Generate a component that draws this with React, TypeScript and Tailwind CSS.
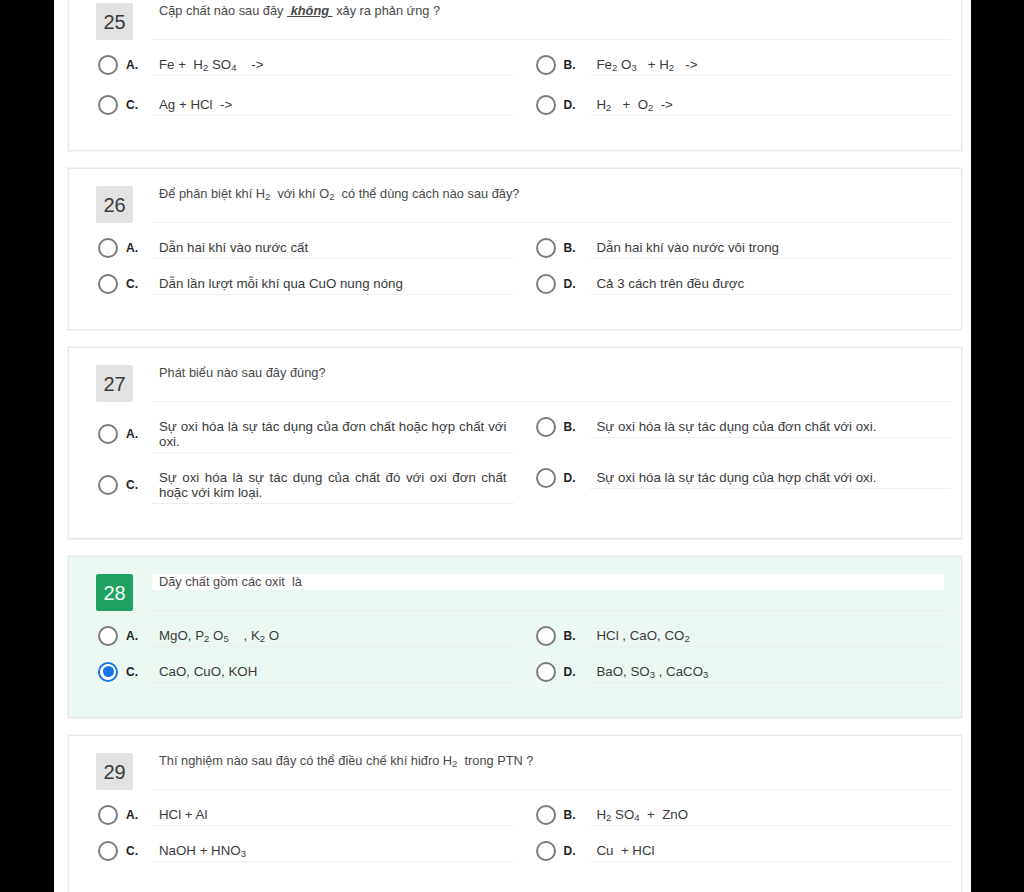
import React from 'react';

type Opt = React.ReactNode;

interface Question {
  num: number;
  text: React.ReactNode;
  options: [Opt, Opt, Opt, Opt];
  active?: boolean;
  selected?: number;
  tallSecondRow?: boolean;
}

const S = ({ children }: { children: React.ReactNode }) => <sub className="text-[9.5px]">{children}</sub>;

const questions: Question[] = [
  {
    num: 25,
    text: (
      <>
        Cặp chất nào sau đây{' '}
        <span className="font-bold italic underline">{'\u00a0không\u00a0'}</span> xảy ra phản ứng ?
      </>
    ),
    options: [
      <>Fe +  H<S>2</S> SO<S>4</S>{'    ->'}</>,
      <>Fe<S>2</S> O<S>3</S>{'   + '}H<S>2</S>{'   ->'}</>,
      <>Ag + HCl  -&gt;</>,
      <>H<S>2</S>{'   +  '}O<S>2</S>{'  ->'}</>,
    ],
    tallSecondRow: true,
  },
  {
    num: 26,
    text: <>Để phân biệt khí H<S>2</S>  với khí O<S>2</S>  có thể dùng cách nào sau đây?</>,
    options: [
      'Dẫn hai khí vào nước cất',
      'Dẫn hai khí vào nước vôi trong',
      'Dẫn lần lượt mỗi khí qua CuO nung nóng',
      'Cả 3 cách trên đều được',
    ],
  },
  {
    num: 27,
    text: 'Phát biểu nào sau đây đúng?',
    options: [
      'Sự oxi hóa là sự tác dụng của đơn chất hoặc hợp chất với oxi.',
      'Sự oxi hóa là sự tác dụng của đơn chất với oxi.',
      'Sự oxi hóa là sự tác dụng của chất đó với oxi đơn chất hoặc với kim loại.',
      'Sự oxi hóa là sự tác dụng của hợp chất với oxi.',
    ],
  },
  {
    num: 28,
    text: 'Dãy chất gồm các oxit  là',
    options: [
      <>MgO, P<S>2</S> O<S>5</S>{'    , '}K<S>2</S> O</>,
      <>HCl , CaO, CO<S>2</S></>,
      'CaO, CuO, KOH',
      <>BaO, SO<S>3</S> , CaCO<S>3</S></>,
    ],
    active: true,
    selected: 2,
  },
  {
    num: 29,
    text: <>Thí nghiệm nào sau đây có thể điều chế khí hiđro H<S>2</S>  trong PTN ?</>,
    options: [
      'HCl + Al',
      <>H<S>2</S> SO<S>4</S>{'  +  '}ZnO</>,
      <>NaOH + HNO<S>3</S></>,
      'Cu  + HCl',
    ],
  },
];

const letters = ['A.', 'B.', 'C.', 'D.'];

const Radio = ({ checked }: { checked: boolean }) =>
  checked ? (
    <div className="ml-[2px] w-[20px] h-[20px] shrink-0 rounded-full border-2 border-[#1a73e8] bg-white flex items-center justify-center">
      <div className="w-[11px] h-[11px] rounded-full bg-[#1a73e8]" />
    </div>
  ) : (
    <div className="ml-[2px] w-[20px] h-[20px] shrink-0 rounded-full border-2 border-[#7b7b7b] bg-white" />
  );

const QuestionCard = ({ q }: { q: Question }) => (
  <div
    className={`border border-[#e6e6e6] shadow-[0_0_0_1px_#f4f4f4] pl-[27px] pr-[10px] pt-[17px] pb-[34px] ${
      q.active ? 'bg-[#ecf9f3]' : 'bg-white'
    }`}
  >
    {/* question row */}
    <div className="flex gap-[19px]">
      <div
        className={`w-[37px] h-[37px] shrink-0 rounded-[2px] flex items-center justify-center text-[20px] ${
          q.active ? 'bg-[#21a063] text-[#effff6]' : 'bg-[#e2e2e2] text-[#3a3a3a]'
        }`}
      >
        {q.num}
      </div>
      <div className="flex-1 h-[37px] border-b border-[#eeeeee] pr-[7px]">
        <div className="bg-white px-[7px] leading-[16px] text-[12.8px] text-[#484848] whitespace-pre-wrap">{q.text}</div>
      </div>
    </div>

    {/* options */}
    <div className="grid grid-cols-2 gap-x-[20px] items-start">
      {q.options.map((opt, i) => (
        <div key={i} className={i >= 2 && q.tallSecondRow ? 'pt-[17px]' : 'pt-[13px]'}>
          <div className="flex items-center">
            <Radio checked={q.selected === i} />
            <span className="ml-[8px] w-[26px] shrink-0 text-[12px] font-bold text-[#222]">{letters[i]}</span>
            <div className="flex-1 border-b border-[#eeeeee] px-[7px] pt-[4px] pb-[3px] leading-[15px] text-[13.3px] text-[#3a3a3a] text-justify whitespace-pre-wrap">
              {opt}
            </div>
          </div>
        </div>
      ))}
    </div>
  </div>
);

export default function App() {
  return (
    <div className="h-[892px] w-[1024px] overflow-hidden bg-black font-['Liberation_Sans',Arial,sans-serif]">
      <div className="ml-[54px] w-[917px] min-h-full bg-white pl-[14px] pr-[9px]">
        <div className="-mt-[15px] flex flex-col gap-[17px]">
          {questions.map((q) => (
            <QuestionCard key={q.num} q={q} />
          ))}
        </div>
      </div>
    </div>
  );
}
